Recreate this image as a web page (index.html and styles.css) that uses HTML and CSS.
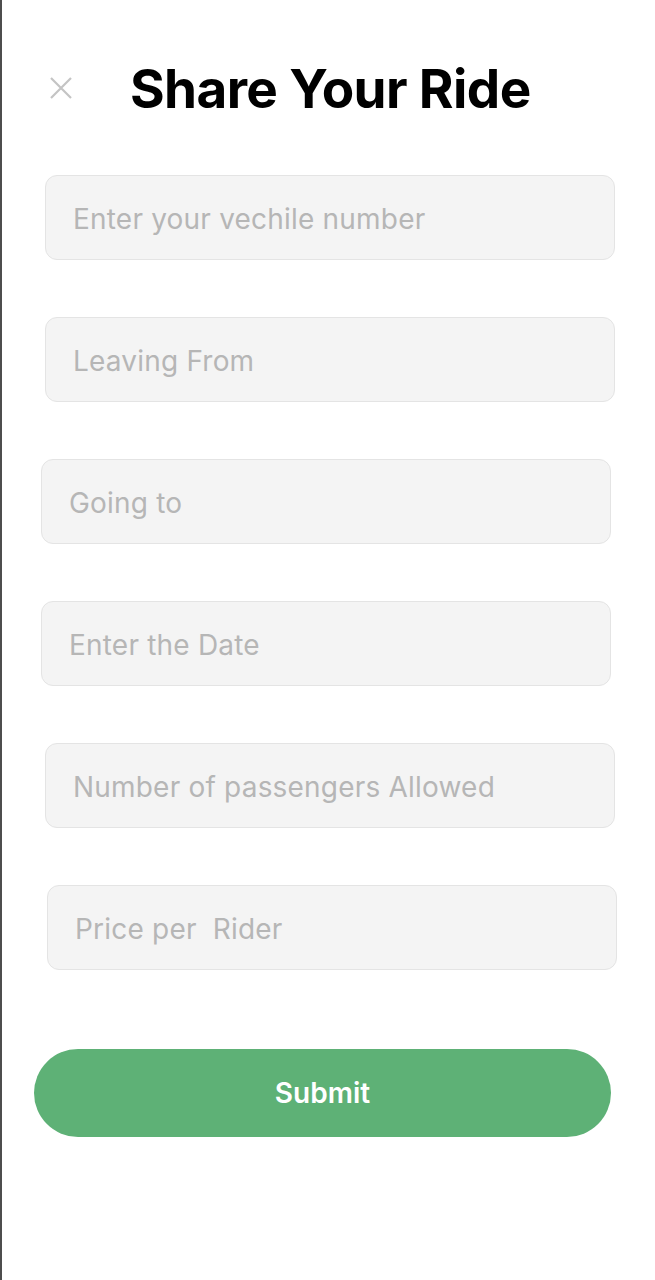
FILE: index.html
```html
<!DOCTYPE html>
<html lang="en">
<head>
<meta charset="utf-8">
<title>Share Your Ride</title>
<link rel="stylesheet" href="styles.css">
</head>
<body>
<div class="screen">
  <header class="header">
    <button class="close" aria-label="Close">
      <svg width="24" height="24" viewBox="0 0 24 24"><path d="M2 2 L22 22 M22 2 L2 22" stroke="#c4c4c4" stroke-width="2.2" fill="none" stroke-linecap="butt"/></svg>
    </button>
    <h1 class="title">Share Your Ride</h1>
  </header>
  <form class="form">
    <input class="field" type="text" placeholder="Enter your vechile number">
    <input class="field" type="text" placeholder="Leaving From">
    <input class="field field--left" type="text" placeholder="Going to">
    <input class="field field--left" type="text" placeholder="Enter the Date">
    <input class="field" type="text" placeholder="Number of passengers Allowed">
    <input class="field field--right" type="text" placeholder="Price per&nbsp; Rider">
    <button class="submit" type="button">Submit</button>
  </form>
</div>
</body>
</html>
```

FILE: styles.css
```css
* { box-sizing: border-box; }
html, body { margin: 0; padding: 0; background: #fff; }
body {
  font-family: Inter, "Noto Sans", sans-serif;
  min-height: 1280px;
  border-left: 2px solid #4d4d4d;
}
.screen {
  padding-top: 55px;
}
.header {
  display: flex;
  align-items: center;
  height: 66px;
  padding-left: 47px;
}
.close {
  border: 0;
  background: none;
  padding: 0;
  width: 24px;
  height: 24px;
  display: flex;
  align-items: center;
  justify-content: center;
}
.title {
  margin: 2px 0 0 57px;
  font-size: 53px;
  font-weight: 700;
  color: #000;
  letter-spacing: -0.6px;
  line-height: 66px;
}
.form {
  display: flex;
  flex-direction: column;
  gap: 57px;
  padding-top: 54px;
}
.field {
  width: 570px;
  height: 85px;
  margin-left: 43px;
  background: #f4f4f4;
  border: 1px solid #e4e4e4;
  border-radius: 12px;
  padding: 2px 0 0 27px;
  font-family: Inter, "Noto Sans", sans-serif;
  font-size: 28px;
  letter-spacing: 0.2px;
  color: #333;
  outline: none;
}
.field--left { margin-left: 39px; }
.field--right { margin-left: 45px; }
.field::placeholder { color: #b6b6b6; }
.submit {
  margin: 22px 0 0 32px;
  width: 577px;
  height: 88px;
  border: 0;
  border-radius: 44px;
  background: #5eb176;
  color: #fff;
  font-family: Inter, "Noto Sans", sans-serif;
  font-size: 28px;
  font-weight: 600;
  letter-spacing: 0;
}
```
